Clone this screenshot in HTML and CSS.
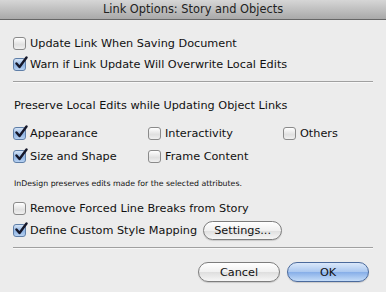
FILE: index.html
```html
<!DOCTYPE html>
<html lang="en">
<head>
  <meta charset="UTF-8" />
  <title>Link Options: Story and Objects</title>
  <link rel="stylesheet" href="styles.css">
</head>
<body>

<div class="dialog">
  <div class="titlebar">Link Options: Story and Objects</div>

  <div class="group top">
    <label class="opt"><span class="box"></span>Update Link When Saving Document</label>
    <label class="opt"><span class="box on"><svg viewBox="0 0 14 14"><path d="M2.5 7.5 L5.5 11 L12.5 1.5"/></svg></span>Warn if Link Update Will Overwrite Local Edits</label>
  </div>

  <div class="sep"></div>

  <div class="heading">Preserve Local Edits while Updating Object Links</div>
  <div class="attrs">
    <label class="opt"><span class="box on"><svg viewBox="0 0 14 14"><path d="M2.5 7.5 L5.5 11 L12.5 1.5"/></svg></span>Appearance</label>
    <label class="opt"><span class="box"></span>Interactivity</label>
    <label class="opt"><span class="box"></span>Others</label>
    <label class="opt"><span class="box on"><svg viewBox="0 0 14 14"><path d="M2.5 7.5 L5.5 11 L12.5 1.5"/></svg></span>Size and Shape</label>
    <label class="opt"><span class="box"></span>Frame Content</label>
  </div>
  <div class="note">InDesign preserves edits made for the selected attributes.</div>

  <div class="group bottom">
    <label class="opt"><span class="box"></span>Remove Forced Line Breaks from Story</label>
    <div class="opt">
      <label class="opt"><span class="box on"><svg viewBox="0 0 14 14"><path d="M2.5 7.5 L5.5 11 L12.5 1.5"/></svg></span>Define Custom Style Mapping</label>
      <button class="pill settings">Settings...</button>
    </div>
  </div>

  <div class="sep"></div>

  <div class="actions">
    <button class="pill">Cancel</button>
    <button class="pill default">OK</button>
  </div>
</div>

</body>
</html>
```

FILE: styles.css
```css
* {
  margin: 0;
  padding: 0;
  box-sizing: border-box;
}
body {
  background: #ececec;
  font-family: 'DejaVu Sans', sans-serif;
  font-size: 11.25px;
  color: #111;
}
.dialog {
  width: 386px;
  height: 292px;
  background: #ececec;
}
.titlebar {
  height: 20px;
  line-height: 19px;
  text-align: center;
  font-size: 11.4px;
  color: #222;
  background: linear-gradient(#d6d6d6, #a9a9a9);
  border-bottom: 1px solid #666;
}
.group.top {
  padding: 13px 0 0 13px;
}
.opt {
  display: flex;
  align-items: center;
  height: 21px;
  white-space: nowrap;
}
.box {
  position: relative;
  width: 13px;
  height: 13px;
  margin-right: 4px;
  border: 1px solid #8a8a8a;
  border-radius: 3px;
  background: linear-gradient(#ffffff, #e0e0e0 60%, #f0f0f0);
  flex-shrink: 0;
}
.box.on {
  border-color: #5f7fa8;
  background: linear-gradient(#d5e4f6, #8fb4e4 55%, #b7d1f1);
}
.box svg {
  position: absolute;
  left: 0;
  top: -3px;
  width: 14px;
  height: 14px;
  fill: none;
  stroke: #15172a;
  stroke-width: 2.4;
  stroke-linecap: round;
  stroke-linejoin: round;
}
.sep {
  margin: 6px 13px 0;
  height: 2px;
  background: #a0a0a0;
  border-bottom: 1px solid #f8f8f8;
}
.heading {
  margin: 15px 0 0 14px;
  line-height: 16px;
}
.attrs {
  display: grid;
  grid-template-columns: 135px 135px 100px;
  grid-auto-rows: 23px;
  margin: 8px 0 0 13px;
}
.attrs .opt {
  height: 23px;
}
.note {
  margin: 10px 0 0 14px;
  font-size: 7.8px;
  line-height: 12px;
}
.group.bottom {
  padding: 7px 0 0 13px;
}
.group.bottom .opt {
  height: 22px;
}
.pill {
  font-family: 'DejaVu Sans', sans-serif;
  font-size: 11.25px;
  color: #111;
  height: 19px;
  border: 1px solid #7d7d7d;
  border-radius: 10px;
  background: linear-gradient(#ffffff, #f0f0f0 50%, #dedede 51%, #f6f6f6);
  box-shadow: 0 1px 1px rgba(0, 0, 0, 0.15);
}
.settings {
  width: 79px;
  margin-left: 6px;
}
.sep:last-of-type {
  margin-top: 4px;
}
.actions {
  display: flex;
  justify-content: flex-end;
  gap: 7px;
  padding: 13px 17px 0 0;
}
.actions .pill {
  width: 82px;
  height: 20px;
}
.pill.default {
  border-color: #4b6a9c;
  background: linear-gradient(#dbe8fa, #a9c7f0 50%, #86aee8 51%, #c4dcf8);
}
```
